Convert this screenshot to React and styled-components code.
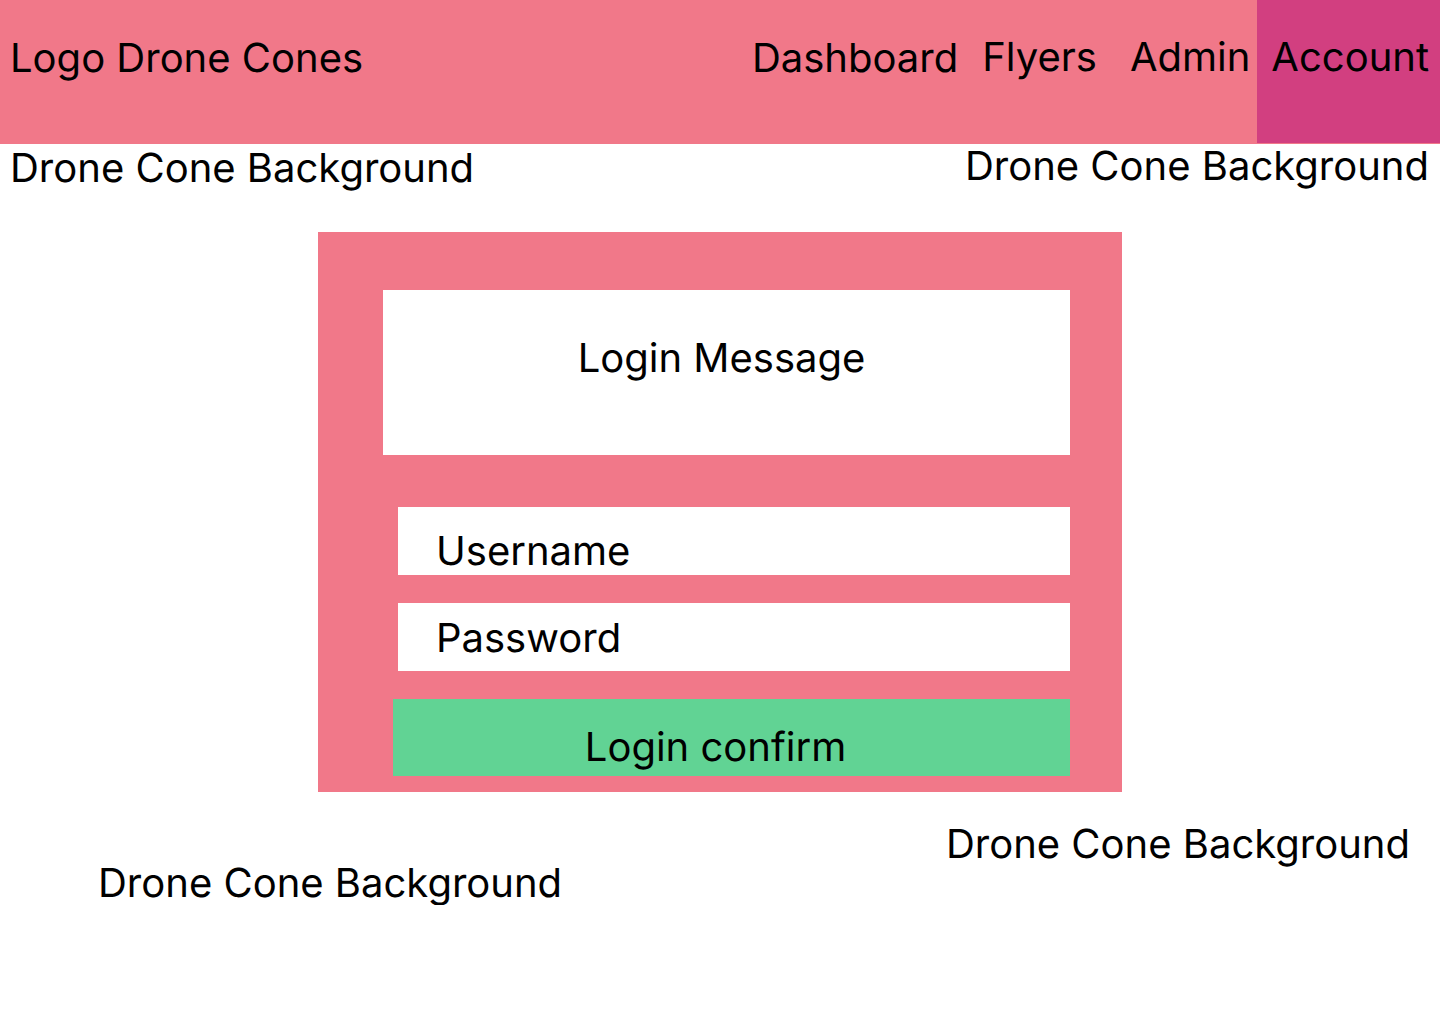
import React from "react";
import styled, { createGlobalStyle } from "styled-components";

const GlobalStyle = createGlobalStyle`
  *, *::before, *::after { box-sizing: border-box; }
  body {
    margin: 0;
    background: #ffffff;
    color: #000000;
    font: 400 40px/48px Inter, "Liberation Sans", sans-serif;
    text-rendering: geometricPrecision;
  }
`;

const Header = styled.header`
  display: flex;
  justify-content: space-between;
  height: 144px;
  background: #f17889;
`;

const Brand = styled.a`
  padding: 34px 0 0 10px;
  color: inherit;
  text-decoration: none;
`;

const Nav = styled.nav`
  display: flex;
`;

const NavLink = styled.a`
  padding: ${({ $low }) => ($low ? 34 : 33)}px ${({ $end }) => $end}px 0 0;
  color: inherit;
  text-decoration: none;
`;

const AccountLink = styled(NavLink)`
  height: 143px;
  padding: 33px 11px 0 14px;
  background: #d23f80;
`;

const Row = styled.div`
  display: flex;
  justify-content: space-between;
  padding: ${({ $pad }) => $pad};
  line-height: 44px;
`;

const Caption = styled.p`
  margin: 0;
  padding-top: ${({ $drop = 0 }) => $drop}px;
`;

const Card = styled.form`
  display: flex;
  flex-direction: column;
  width: 804px;
  max-width: 100%;
  margin: 0 auto;
  padding: 58px 52px 16px 65px;
  background: #f17889;
`;

const Message = styled.h1`
  margin: 0 0 52px;
  padding: 44px 10px 73px 0;
  background: #ffffff;
  font: inherit;
  text-align: center;
`;

const Field = styled.input`
  height: 68px;
  margin: 0 0 28px 15px;
  padding: ${({ $pad }) => $pad};
  border: 0;
  border-radius: 0;
  background: #ffffff;
  color: inherit;
  font: inherit;
  text-rendering: inherit;

  &::placeholder {
    color: #000000;
    opacity: 1;
  }
`;

const Submit = styled.button`
  height: 77px;
  margin: 0 0 0 10px;
  padding: 24px 32px 5px 0;
  border: 0;
  background: #61d394;
  color: inherit;
  font: inherit;
  text-rendering: inherit;
  cursor: pointer;
`;

export default function App() {
  return (
    <>
      <GlobalStyle />
      <Header>
        <Brand href="#home">Logo Drone Cones</Brand>
        <Nav aria-label="Main">
          <NavLink href="#dashboard" $low $end={24}>Dashboard</NavLink>
          <NavLink href="#flyers" $end={33}>Flyers</NavLink>
          <NavLink href="#admin" $end={7}>Admin</NavLink>
          <AccountLink href="#account" aria-current="page">Account</AccountLink>
        </Nav>
      </Header>
      <main>
        <Row $pad="0 11px 42px 10px">
          <Caption $drop={2}>Drone Cone Background</Caption>
          <Caption>Drone Cone Background</Caption>
        </Row>
        <Card onSubmit={(event) => event.preventDefault()}>
          <Message>Login Message</Message>
          <Field aria-label="Username" name="username" placeholder="Username" autoComplete="username" $pad="18px 38px 0" />
          <Field aria-label="Password" name="password" type="password" placeholder="Password" autoComplete="current-password" $pad="0 38px" />
          <Submit type="submit">Login confirm</Submit>
        </Card>
        <Row $pad="30px 30px 0 98px">
          <Caption $drop={39}>Drone Cone Background</Caption>
          <Caption>Drone Cone Background</Caption>
        </Row>
      </main>
    </>
  );
}
